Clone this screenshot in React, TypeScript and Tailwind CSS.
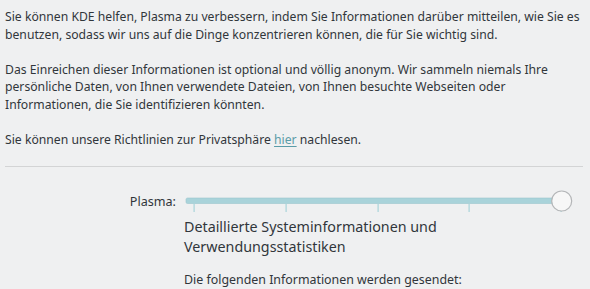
import React from "react";

function Slider() {
  const ticks = [10, 102, 194, 285, 377];
  return (
    <svg width="390" height="23" viewBox="0 0 390 23" className="block shrink-0">
      <rect x="2" y="8" width="372" height="5.5" rx="1.5" fill="#a9d3da" stroke="#9cc6cd" strokeWidth="0.6" />
      {ticks.map((x) => (
        <rect key={x} x={x - 0.5} y="13.5" width="1.2" height="8.5" fill="#a9d3da" />
      ))}
      <circle cx="377.7" cy="11" r="10" fill="#f7f7f7" stroke="#b4b6b8" strokeWidth="1.2" />
    </svg>
  );
}

export default function App() {
  return (
    <div
      className="w-[590px] h-[289px] overflow-hidden bg-[#eff0f1] text-[#31363b] pt-[8px] pl-[5px] pr-[7px]"
      style={{ fontFamily: '"Noto Sans", "DejaVu Sans", sans-serif' }}
    >
      <div className="text-[12.2px] leading-[17.5px] whitespace-nowrap">
        <p>
          Sie können KDE helfen, Plasma zu verbessern, indem Sie Informationen darüber mitteilen, wie Sie es
          <br />
          benutzen, sodass wir uns auf die Dinge konzentrieren können, die für Sie wichtig sind.
        </p>
        <p className="mt-[17.5px]">
          Das Einreichen dieser Informationen ist optional und völlig anonym. Wir sammeln niemals Ihre
          <br />
          persönliche Daten, von Ihnen verwendete Dateien, von Ihnen besuchte Webseiten oder
          <br />
          Informationen, die Sie identifizieren könnten.
        </p>
        <p className="mt-[17.5px]">
          Sie können unsere Richtlinien zur Privatsphäre{" "}
          <span className="text-[#5a9ca8] underline underline-offset-2">hier</span> nachlesen.
        </p>
      </div>
      <div className="mt-[18px] h-px bg-[#d3d4d5]" />
      <div className="mt-[23px] flex items-center">
        <div className="w-[171px] text-right text-[12.6px] leading-[17.5px]">Plasma:</div>
        <div className="ml-[8px]">
          <Slider />
        </div>
      </div>
      <div className="ml-[179px]">
        <div className="mt-[4px] text-[14.3px] leading-[20px]">
          Detaillierte Systeminformationen und
          <br />
          Verwendungsstatistiken
        </div>
        <div className="mt-[14px] text-[12.4px] leading-[17.5px] whitespace-nowrap">
          Die folgenden Informationen werden gesendet:
        </div>
      </div>
    </div>
  );
}
